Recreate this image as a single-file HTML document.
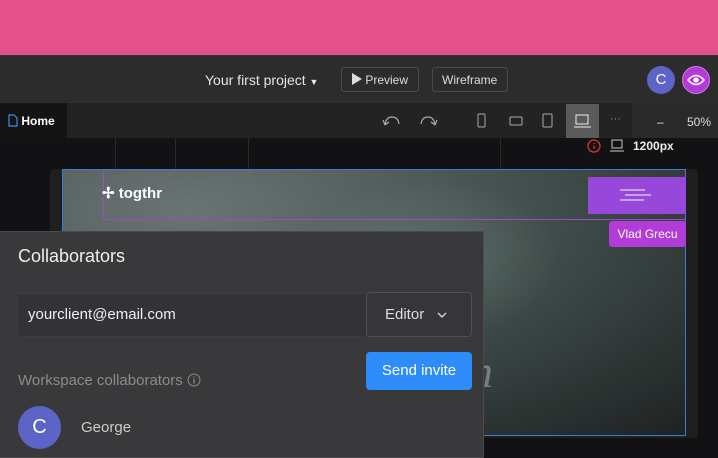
<!DOCTYPE html>
<html><head><style>
*{box-sizing:border-box;margin:0;padding:0}
body{width:718px;height:458px;overflow:hidden;background:#121214;font-family:"Liberation Sans",sans-serif;position:relative;color:#ddd}
.a{position:absolute}
</style></head><body>
<div class="a" style="left:0;top:0;width:718px;height:55px;background:#e4508a"></div>
<div class="a" style="left:0;top:55px;width:718px;height:48px;background:#2c2c2c;border-top:1px solid #333"></div>
<div class="a" style="left:205px;top:72px;font-size:14px;color:#e6e6e6">Your first project <span style="font-size:9px">▼</span></div>
<div class="a" style="left:341px;top:67px;width:78px;height:25px;border:1px solid #4a4a4a;border-radius:3px;font-size:12px;color:#ddd;padding:5px 0 0 9px"><svg width="11" height="12" style="vertical-align:-1px"><path d="M1 0L11 6L1 12Z" fill="#ddd"/></svg> Preview</div>
<div class="a" style="left:432px;top:67px;width:76px;height:25px;border:1px solid #4a4a4a;border-radius:3px;font-size:12px;color:#ddd;padding:5px 0 0 9px">Wireframe</div>
<div class="a" style="left:647px;top:66px;width:28px;height:28px;border-radius:50%;background:#5c64c8;color:#fff;font-size:15px;text-align:center;line-height:28px">C</div>
<div class="a" style="left:682px;top:66px;width:28px;height:28px;border-radius:50%;background:#b23ad6;border:1px solid #d47be8"><svg width="28" height="28" style="position:absolute;left:-1px;top:-1px"><path d="M6 14Q14 5 22 14Q14 23 6 14Z" fill="none" stroke="#fff" stroke-width="1.6"/><circle cx="14" cy="14" r="2.6" fill="#fff"/></svg></div>
<div class="a" style="left:0;top:103px;width:718px;height:35px;background:#232323"></div>
<div class="a" style="left:0;top:103px;width:67px;height:35px;background:#141414;font-size:12px;font-weight:bold;color:#fff;padding:11px 0 0 8px"><svg width="10" height="13" style="vertical-align:-2px"><path d="M1 1H6L9 4V12H1Z" fill="none" stroke="#3b8ee8" stroke-width="1.2"/></svg> Home</div>
<svg class="a" style="left:380px;top:110px" width="60" height="22"><path d="M5 15Q6 7 12 7Q18 7 19 14M5 15L3 10M5 15L9 12" fill="none" stroke="#aaa" stroke-width="1.2"/><path d="M55 15Q54 7 48 7Q42 7 41 14M55 15L57 10M55 15L51 12" fill="none" stroke="#aaa" stroke-width="1.2"/></svg>
<svg class="a" style="left:470px;top:110px" width="100" height="22"><rect x="8" y="4" width="7" height="13" rx="1" fill="none" stroke="#aaa"/><rect x="40" y="7" width="12" height="8" rx="1" fill="none" stroke="#aaa"/><rect x="73" y="4" width="9" height="13" rx="1" fill="none" stroke="#aaa"/></svg>
<div class="a" style="left:566px;top:104px;width:33px;height:34px;background:#5a5a5a"><svg width="33" height="34"><rect x="10" y="11" width="12" height="9" fill="none" stroke="#eee"/><path d="M8 23H25" stroke="#eee"/></svg></div>
<div class="a" style="left:610px;top:113px;font-size:11px;color:#999">···</div>
<div class="a" style="left:632px;top:103px;width:86px;height:35px;background:#2a2a2a;font-size:12px;color:#ddd;padding:12px 0 0 25px">–&nbsp;&nbsp;&nbsp;&nbsp;&nbsp;&nbsp;&nbsp;50%</div>
<div class="a" style="left:115px;top:138px;width:1px;height:32px;background:#2a2a2a"></div>
<div class="a" style="left:175px;top:138px;width:1px;height:32px;background:#2a2a2a"></div>
<div class="a" style="left:248px;top:138px;width:1px;height:32px;background:#2a2a2a"></div>
<div class="a" style="left:500px;top:138px;width:1px;height:32px;background:#2a2a2a"></div>
<svg class="a" style="left:586px;top:138px" width="40" height="16"><circle cx="8" cy="8" r="6" fill="none" stroke="#d33" stroke-width="1.3"/><path d="M8 5V6M8 7.5V11" stroke="#d33" stroke-width="1.3"/><rect x="26" y="2" width="10" height="8" fill="none" stroke="#ccc"/><path d="M24 13H38" stroke="#ccc"/></svg>
<div class="a" style="left:633px;top:139px;font-size:12px;font-weight:bold;color:#eee">1200px</div>
<div class="a" style="left:50px;top:169px;width:648px;height:269px;background:#1f1f1f;border-radius:4px"></div>
<div class="a" style="left:62px;top:169px;width:624px;height:267px;border:1px solid #3a7bd5;background:radial-gradient(ellipse at 20% 15%,#6a7474 0%,#4e5a58 35%,#3a4644 60%,#1e2222 100%)"></div>
<div class="a" style="left:300px;top:180px;width:260px;height:160px;background:radial-gradient(ellipse,rgba(120,150,140,.35),rgba(0,0,0,0) 70%)"></div>
<div class="a" style="left:103px;top:171px;width:583px;height:49px;border:1px solid #9a4cc8;border-top:none"></div>
<div class="a" style="left:102px;top:184px;font-size:15px;font-weight:bold;color:#fff">✢ togthr</div>
<div class="a" style="left:588px;top:177px;width:98px;height:37px;background:#9747d9"><svg width="98" height="37"><path d="M32 13H57M37 18H63M32 23H56" stroke="#e9d9f5" stroke-width="1.3"/></svg></div>
<div class="a" style="left:609px;top:221px;width:77px;height:26px;background:#b13cd8;border-radius:3px;font-size:12px;color:#fff;text-align:center;line-height:26px">Vlad Grecu</div>
<div class="a" style="left:470px;top:345px;font-family:'Liberation Serif',serif;font-style:italic;font-size:46px;color:#7a7e7e">n</div>
<div class="a" style="left:0;top:231px;width:484px;height:227px;background:#39383b;border:1px solid #4a4a4c;border-left:none"></div>
<div class="a" style="left:18px;top:246px;font-size:18px;color:#eee">Collaborators</div>
<div class="a" style="left:17px;top:293px;width:350px;height:44px;background:#333236;border:1px solid #3e3d41;border-radius:3px;font-size:15px;color:#f0f0f0;padding:12px 0 0 10px">yourclient@email.com</div>
<div class="a" style="left:366px;top:292px;width:106px;height:45px;border:1px solid #505052;border-radius:4px;background:#363539;font-size:15px;color:#ddd;padding:13px 0 0 18px">Editor&nbsp;&nbsp;&nbsp;<svg width="10" height="7"><path d="M1 1L5 5L9 1" fill="none" stroke="#ddd" stroke-width="1.3"/></svg></div>
<div class="a" style="left:366px;top:352px;width:106px;height:38px;background:#2d8cf7;border-radius:4px;font-size:15px;color:#fff;text-align:center;line-height:38px">Send invite</div>
<div class="a" style="left:18px;top:372px;font-size:15px;color:#8c8c8c">Workspace collaborators <svg width="14" height="14" style="vertical-align:-2px"><circle cx="7" cy="7" r="6" fill="none" stroke="#8c8c8c"/><path d="M7 6V10.5M7 3.5V4.8" stroke="#8c8c8c" stroke-width="1.2"/></svg></div>
<div class="a" style="left:18px;top:406px;width:43px;height:43px;border-radius:50%;background:#5c64c8;color:#fff;font-size:20px;text-align:center;line-height:43px">C</div>
<div class="a" style="left:81px;top:419px;font-size:15px;color:#ccc">George</div>
</body></html>
